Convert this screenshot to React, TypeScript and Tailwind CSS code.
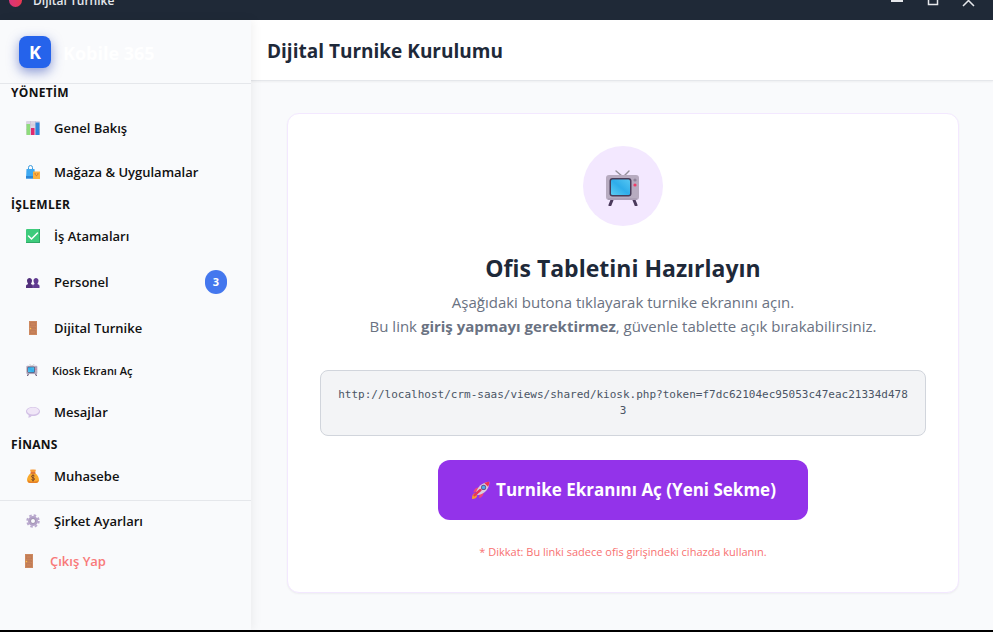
import type { ReactNode } from "react";
import clsx from "clsx";

type IconProps = { className?: string };

function ChartIcon({ className }: IconProps) {
  return (
    <svg aria-hidden="true" className={className} viewBox="0 0 28 28">
      <rect width="28" height="28" rx="2" fill="#dcd5e4" />
      <path d="M0 8h28M0 17h28M9 0v28M19 0v28" stroke="#c3b8cf" strokeWidth="1" />
      <rect x="1" y="6" width="7" height="22" fill="#8fdc7c" />
      <rect x="10" y="14" width="7" height="14" fill="#e0296f" />
      <rect x="19" y="3" width="8" height="25" fill="#2f86dc" />
    </svg>
  );
}

function ShoppingIcon({ className }: IconProps) {
  return (
    <svg aria-hidden="true" className={className} viewBox="0 0 28 28">
      <path d="M5 10V5a4 4 0 0 1 8 0v5" fill="none" stroke="#3f9bdc" strokeWidth="2" />
      <path d="M1 8h16l1 19H0z" fill="#3fa9f1" />
      <path d="M0 22h18v5H0z" fill="#2b86d6" />
      <path d="M14 13h14v15H14z" fill="#fdb240" />
      <path d="M18 16c0 7 6 7 6 0" fill="none" stroke="#d9772b" strokeWidth="2" />
    </svg>
  );
}

function CheckIcon({ className }: IconProps) {
  return (
    <svg aria-hidden="true" className={className} viewBox="0 0 28 28">
      <rect width="28" height="28" rx="2" fill="#3ecb7c" />
      <path d="M0 26h28v2H0zM26 0h2v28h-2z" fill="#2fa866" />
      <path d="m5 14 6 6L23 8" fill="none" stroke="#fff" strokeWidth="3" strokeLinecap="round" />
    </svg>
  );
}

function PeopleIcon({ className }: IconProps) {
  return (
    <svg aria-hidden="true" className={className} viewBox="0 0 28 28" fill="#52307c">
      <path d="M2 11c0-7 10-7 10 0 0 4-2 5-2 7 3 1 4 2 4 4v4H0v-4c0-2 2-3 4-4 0-2-2-3-2-7z" />
      <path d="M15 11c0-7 10-7 10 0 0 4-2 5-2 7 2 1 4 2 4 4v4H14v-4c0-2 1-3 3-4 0-2-2-3-2-7z" fill="#613b91" />
      <path d="M14 19v7" stroke="#8b6bb5" strokeWidth="1" />
    </svg>
  );
}

function DoorIcon({ className }: IconProps) {
  return (
    <svg aria-hidden="true" className={className} viewBox="0 0 28 28">
      <path d="M6 0h16v28H6z" fill="#cd885f" />
      <path d="M9 3h10v7H9zM9 13h10v3H9zM9 19h10v6H9z" fill="#c98159" stroke="#b77350" strokeWidth="1" />
      <circle cx="9" cy="15" r="1.5" fill="#ffc24a" />
    </svg>
  );
}

function TvIcon({ className }: IconProps) {
  return (
    <svg aria-hidden="true" className={className} viewBox="0 0 36 36">
      <defs>
        <linearGradient id="screen" x1="0" y1="1" x2="1" y2="0">
          <stop offset="0" stopColor="#5bcdf2" />
          <stop offset=".5" stopColor="#2fadea" />
          <stop offset="1" stopColor="#55c6f2" />
        </linearGradient>
      </defs>
      <path d="m11 1 6 5h2l5-5" fill="none" stroke="#94909a" strokeWidth="1.4" strokeLinecap="round" />
      <path d="m7 30-2 5M29 30l2 5" stroke="#4b3a5c" strokeWidth="3" strokeLinecap="round" />
      <rect x="1" y="5" width="33" height="25" rx="3" fill="#b7abc0" />
      <path d="M3 29h29" stroke="#a194ad" strokeWidth="1" />
      <rect x="4.500" y="8" width="22" height="18.500" rx="3" fill="#483c59" />
      <rect x="6" y="9.500" width="19" height="15.500" rx="1.500" fill="url(#screen)" />
      <circle cx="30" cy="10" r="1.6" fill="#8e8299" />
      <circle cx="30" cy="15" r="1.6" fill="#f23b67" />
    </svg>
  );
}

function SpeechIcon({ className }: IconProps) {
  return (
    <svg aria-hidden="true" className={className} viewBox="0 0 28 28">
      <path
        d="M14 4c8 0 14 4 14 9s-6 9-14 9h-3c-1 2-4 3-7 3 1-1 2-3 1-5-3-2-5-4-5-7 0-5 6-9 14-9z"
        fill="#d3c1e6"
      />
      <ellipse cx="14" cy="12" rx="12" ry="7" fill="#f0e6f7" />
    </svg>
  );
}

function MoneyIcon({ className }: IconProps) {
  return (
    <svg aria-hidden="true" className={className} viewBox="0 0 28 28">
      <path d="M8 1c2 1 3 0 6 0s4 1 6 0l-2 7h-8z" fill="#f79a35" />
      <path d="M10 8h8c5 4 8 9 8 14 0 4-3 6-6 6H8c-3 0-6-2-6-6 0-5 3-10 8-14z" fill="#f9a92d" />
      <path d="M4 22c2 4 17 5 21 0 0 4-2 6-5 6H8c-3 0-5-2-4-6z" fill="#e78027" />
      <path d="M9 8h10" stroke="#c6503a" strokeWidth="2" />
      <path d="M17 14c-1-2-6-2-6 1s6 2 6 5-5 3-6 1M14 11v14" fill="none" stroke="#7a4327" strokeWidth="2" />
    </svg>
  );
}

function GearIcon({ className }: IconProps) {
  return (
    <svg aria-hidden="true" className={className} viewBox="0 0 28 28" fill="none">
      <circle cx="14" cy="14" r="11.5" stroke="#b9a8ce" strokeWidth="4" strokeDasharray="5 4.03" />
      <circle cx="14" cy="14" r="7.5" stroke="#b3a2c8" strokeWidth="5" />
      <circle cx="14" cy="14" r="5" stroke="#8b7b9e" strokeWidth="1.5" />
    </svg>
  );
}

function RocketIcon({ className }: IconProps) {
  return (
    <svg aria-hidden="true" className={className} viewBox="0 0 28 28">
      <path d="M11 10c-5 0-8 3-9 8l7-2zM18 18c0 4-2 7-7 9l1-8z" fill="#f0457a" />
      <path d="M4 19c-3 1-4 4-4 9 5 0 7-1 8-5z" fill="#fb9a2c" />
      <path d="M6 19C8 9 16 2 27 1c0 11-7 19-18 21z" fill="#d9cde0" />
      <path d="M19 3c3-1 5-2 8-2 0 3-1 6-2 8z" fill="#ef3352" />
      <path d="m4 22 9-8" stroke="#e8355a" strokeWidth="4" strokeLinecap="round" />
      <circle cx="18" cy="10" r="4" fill="#69578c" />
      <circle cx="18" cy="10" r="2.6" fill="#46aef2" />
    </svg>
  );
}

const sections = [
  {
    title: "YÖNETİM",
    labelClass: "pt-px pb-[5px]",
    items: [
      { label: "Genel Bakış", icon: ChartIcon },
      { label: "Mağaza & Uygulamalar", icon: ShoppingIcon },
    ],
  },
  {
    title: "İŞLEMLER",
    labelClass: "pt-[3px] pb-px",
    items: [
      { label: "İş Atamaları", icon: CheckIcon },
      { label: "Personel", icon: PeopleIcon, badge: 3 },
      { label: "Dijital Turnike", icon: DoorIcon },
      { label: "Kiosk Ekranı Aç", icon: TvIcon, small: true },
      { label: "Mesajlar", icon: SpeechIcon },
    ],
  },
  {
    title: "FİNANS",
    labelClass: "pt-[3px] pb-px",
    items: [{ label: "Muhasebe", icon: MoneyIcon }],
  },
];

function NavLink({ className, children }: { className?: string; children: ReactNode }) {
  return (
    <a href="#" className={clsx("flex items-center pr-6 font-semibold", className)}>
      {children}
    </a>
  );
}

function TitleBar() {
  return (
    <div className="h-5 shrink-0 overflow-hidden bg-[#1f2937] text-gray-200">
      <div className="-mt-5 flex h-10 items-center pl-[9px]">
        <span className="h-[13px] w-[13px] rounded-full bg-linear-to-r from-[#d9337c] to-[#e8384f]" />
        <span className="ml-[11px] pt-0.5 text-xs font-semibold">Dijital Turnike</span>
        <div className="ml-auto flex pr-1.5">
          <button type="button" aria-label="Küçült" className="flex w-9 justify-center">
            <svg className="h-3.5 w-3.5" viewBox="0 0 14 14">
              <path d="M1 8h12" stroke="currentColor" strokeWidth="2" />
            </svg>
          </button>
          <button type="button" aria-label="Ekranı kapla" className="flex w-9 justify-center">
            <svg className="h-3.5 w-3.5" viewBox="0 0 14 14">
              <rect x="2.5" y="2.5" width="9" height="9" fill="none" stroke="currentColor" strokeWidth="1.5" />
            </svg>
          </button>
          <button type="button" aria-label="Kapat" className="flex w-9 justify-center">
            <svg className="h-3.5 w-3.5" viewBox="0 0 14 14">
              <path d="m1 2 11 11m0-11L1 13" stroke="currentColor" strokeWidth="1.5" />
            </svg>
          </button>
        </div>
      </div>
    </div>
  );
}

function Sidebar() {
  return (
    <aside className="z-10 flex w-[251px] shrink-0 flex-col bg-[#f9fafc] text-[#111] shadow-[2px_0_10px_rgba(0,0,0,0.06)]">
      <div className="flex h-16 shrink-0 items-center border-b border-gray-200 pl-[19px]">
        <div className="flex h-8 w-8 items-center justify-center rounded-lg bg-[#2563eb] text-lg font-bold text-white shadow-[0_4px_12px_rgba(30,58,175,0.5)]">
          K
        </div>
        <span className="ml-3 pt-0.5 text-lg font-bold text-white">Kobile 365</span>
      </div>

      <nav className="pb-0.5">
        {sections.map((section) => (
          <div key={section.title}>
            <h2 className={clsx("pl-[11px] text-xs leading-4 font-bold tracking-wide", section.labelClass)}>
              {section.title}
            </h2>
            {section.items.map(({ label, icon: Icon, badge, small }) => (
              <NavLink
                key={label}
                className={clsx(
                  "pl-[26px]",
                  small ? "h-10 text-[11px]" : badge ? "h-12 text-[13px]" : "h-11 text-[13px]"
                )}
              >
                <Icon className={small ? "mr-3.5 h-3 w-3 shrink-0" : "mr-3.5 h-3.5 w-3.5 shrink-0"} />
                <span className="pt-0.5">{label}</span>
                {badge && (
                  <span className="ml-auto flex h-6 w-[22px] items-center justify-center rounded-full bg-[#4477ee] text-[11px] font-bold text-white">
                    {badge}
                  </span>
                )}
              </NavLink>
            ))}
          </div>
        ))}
      </nav>

      <div className="border-t border-gray-200">
        <NavLink className="h-10 pl-[26px] text-[13px]">
          <GearIcon className="mr-3.5 h-3.5 w-3.5" />
          <span className="pt-0.5">Şirket Ayarları</span>
        </NavLink>
        <NavLink className="h-10 pl-[22px] text-[13px] text-[#f87979]">
          <DoorIcon className="mr-3.5 h-3.5 w-3.5" />
          <span className="pt-0.5">Çıkış Yap</span>
        </NavLink>
      </div>
    </aside>
  );
}

export default function App() {
  return (
    <div className="flex h-screen flex-col border-b-2 border-black bg-[#f9fafc] font-['Open_Sans','Noto_Sans',sans-serif]">
      <TitleBar />
      <div className="flex min-h-0 flex-1">
        <Sidebar />
        <div className="flex min-w-0 flex-1 flex-col">
          <header className="flex h-[61px] shrink-0 items-center border-b border-gray-200 bg-white px-4 shadow-xs">
            <h1 className="pt-0.5 text-[19px] font-bold text-gray-800">Dijital Turnike Kurulumu</h1>
          </header>

          <main className="py-8 pr-8 pl-[34px]">
            <section className="mx-auto max-w-2xl rounded-xl border border-purple-100 bg-white p-8 text-center shadow-xs">
              <div className="mx-auto mb-6 flex h-20 w-20 items-center justify-center rounded-full bg-[#f3e8ff]">
                <TvIcon className="mt-1 h-9 w-9" />
              </div>
              <h2 className="mb-1.5 pt-0.5 text-[23px] leading-8 font-bold text-gray-800">Ofis Tabletini Hazırlayın</h2>
              <p className="mb-8 text-[15px] leading-6 text-gray-500">
                Aşağıdaki butona tıklayarak turnike ekranını açın.
                <br />
                Bu link <strong>giriş yapmayı gerektirmez</strong>, güvenle tablette açık bırakabilirsiniz.
              </p>
              <div className="mb-6 rounded-lg border border-gray-300 bg-gray-100 p-4 font-['DejaVu_Sans_Mono',monospace] text-[11px] leading-4 break-all text-gray-600">
                http://localhost/crm-saas/views/shared/kiosk.php?token=f7dc62104ec95053c47eac21334d4783
              </div>
              <a
                href="#"
                className="inline-flex items-center rounded-xl bg-[#9333ea] px-8 py-4 text-[17px] leading-7 font-bold text-white"
              >
                <RocketIcon className="mr-1.5 ml-0.5 h-[18px] w-[18px]" />
                Turnike Ekranını Aç (Yeni Sekme)
              </a>
              <p className="mt-6 text-[11px] leading-4 text-[#f87171]">
                * Dikkat: Bu linki sadece ofis girişindeki cihazda kullanın.
              </p>
            </section>
          </main>
        </div>
      </div>
    </div>
  );
}
